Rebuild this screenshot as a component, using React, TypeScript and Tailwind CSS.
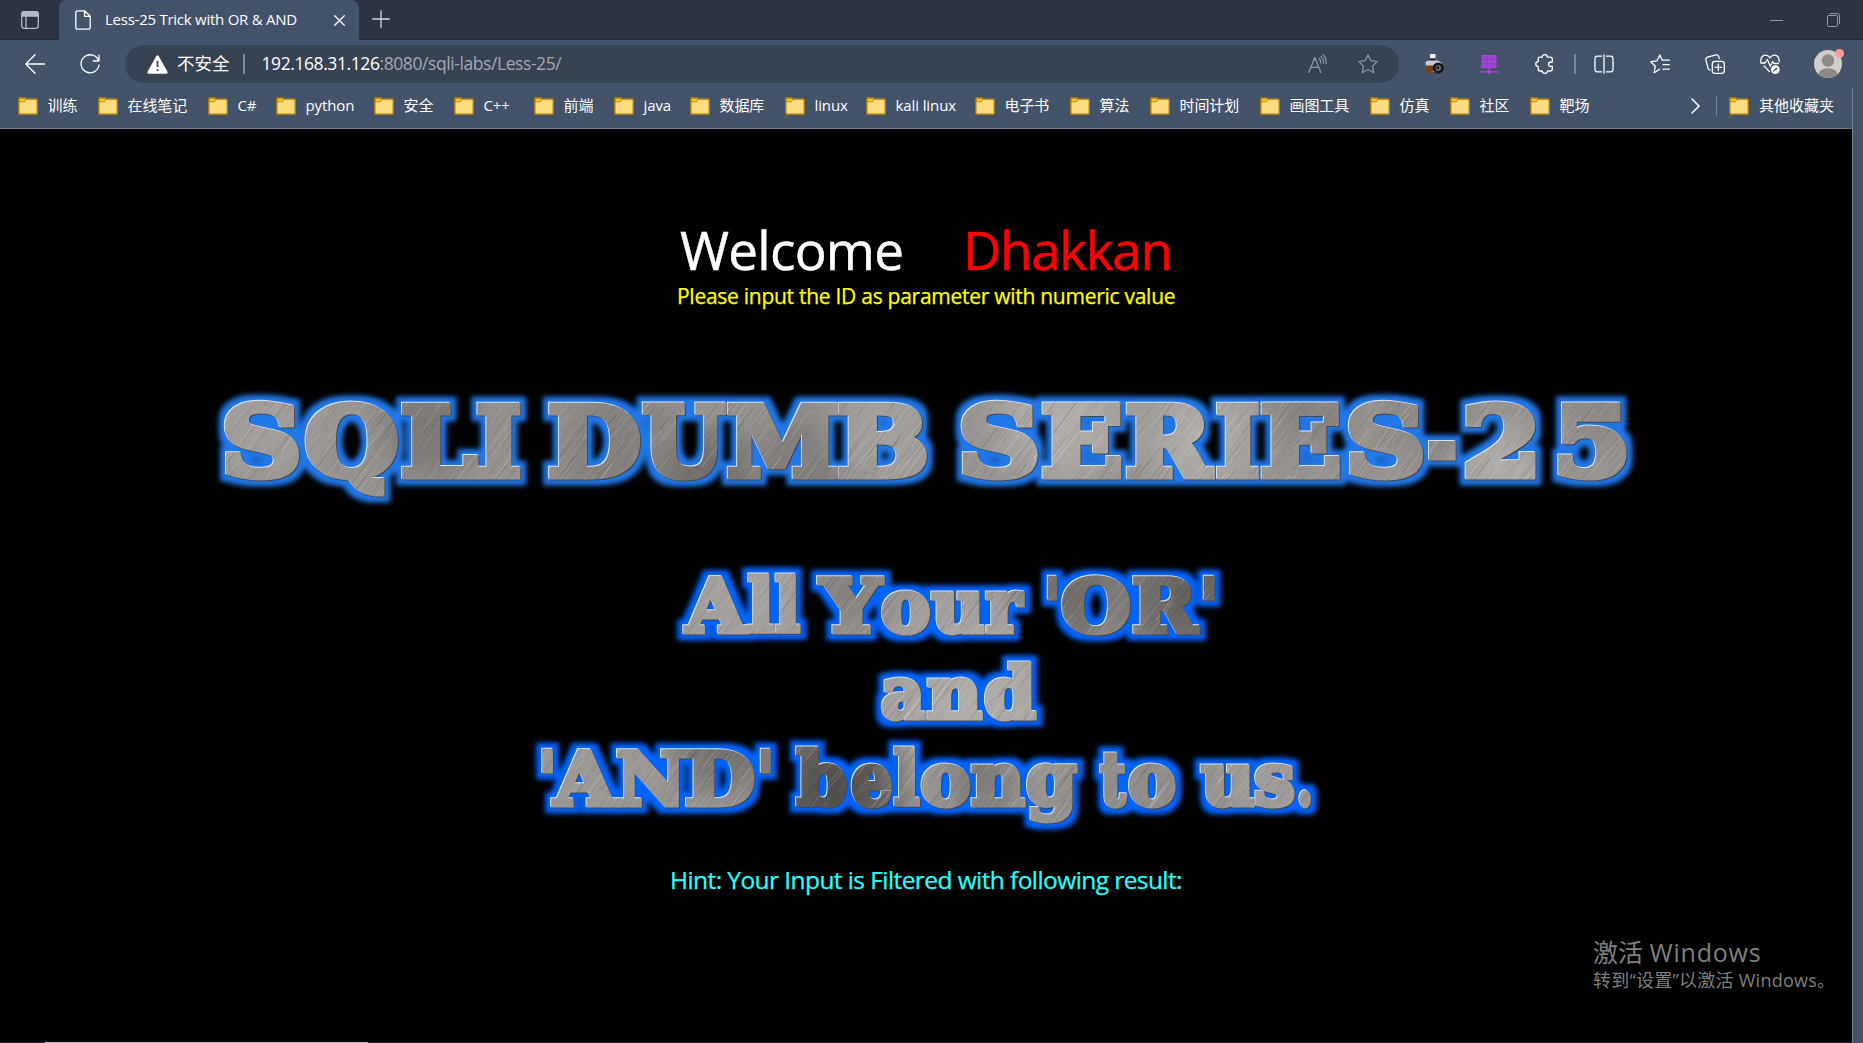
import React, { useMemo } from "react";

type Glyph = [string, number, number];

const TITLE: Glyph[] = [
  ["S", 225, 299.5], ["Q", 306, 398.5], ["L", 402, 479], ["I", 477, 521], [" ", 521.5, 548],
  ["D", 549, 640], ["U", 642.5, 727], ["M", 728, 838.5], ["B", 838.5, 927], [" ", 928, 961],
  ["S", 962, 1038], ["E", 1042.5, 1121], ["R", 1126.5, 1215], ["I", 1216.5, 1260], ["E", 1261.5, 1339.5],
  ["S", 1349, 1423.5], ["-", 1428, 1457], ["2", 1466, 1535], ["5", 1558, 1627],
];
const LINE_1: Glyph[] = [
  ["A", 683, 750], ["l", 747.5, 774.7], ["l", 774.7, 801], [" ", 802, 816], ["Y", 817, 885], ["o", 881, 930.5],
  ["u", 930.5, 985.5], ["r", 985.5, 1025], [" ", 1026, 1046], ["'", 1046.5, 1058.5], ["O", 1062, 1131],
  ["R", 1133, 1200], ["'", 1202.5, 1215.5],
];
const LINE_2: Glyph[] = [["a", 881, 927], ["n", 927, 983], ["d", 984, 1037]];
const LINE_3: Glyph[] = [
  ["'", 541, 554], ["A", 551, 619], ["N", 617, 686], ["D", 686, 755], ["'", 759.5, 772], [" ", 773, 795],
  ["b", 795.5, 847], ["e", 850.5, 892.5], ["l", 893.5, 920.5], ["o", 920.5, 971], ["n", 971, 1026],
  ["g", 1026, 1078], [" ", 1079, 1098], ["t", 1099, 1128], ["o", 1128, 1176.5], [" ", 1177, 1199],
  ["u", 1200, 1255], ["s", 1255, 1295], [".", 1298, 1312.5],
];

/* One line of metal lettering; each glyph is stretched to its own left and right edge. */
function MetalLine({ glyphs, y, size, originX, bold }: { glyphs: Glyph[]; y: number; size: number; originX: number; bold: number }) {
  const spans = useMemo(() => {
    const ctx = document.createElement("canvas").getContext("2d")!;
    ctx.font = `bold ${size}px "DejaVu Serif"`;
    return glyphs.map(([ch, left, right]) => {
      const m = ctx.measureText(ch);
      if (ch === " ") return { ch, x: left - originX, w: right - left };
      const ink = m.actualBoundingBoxRight + m.actualBoundingBoxLeft;
      const k = (right - left - bold) / ink;
      return { ch, x: left + bold / 2 - originX + m.actualBoundingBoxLeft * k, w: m.width * k };
    });
  }, [glyphs, size, originX, bold]);
  return (
    <text y={y} fontSize={size} fontWeight="bold" fontFamily="DejaVu Serif, serif" strokeWidth={bold} xmlSpace="preserve">
      {spans.map((s, i) => (
        <tspan key={i} x={s.x} textLength={s.w} lengthAdjust="spacingAndGlyphs">{s.ch}</tspan>
      ))}
    </text>
  );
}

/* [centre x, centre y, radius, colour] of a soft light or dark patch on the metal */
type Patch = [number, number, number, string];

const TITLE_PATCHES: Patch[] = [
  [60, 60, 90, "#a39f9d"], [230, 70, 70, "#7a7674"], [420, 90, 90, "#827e7c"], [510, 115, 60, "#6f6b69"], [600, 110, 80, "#7f7b79"],
  [690, 70, 80, "#a5a19f"], [860, 60, 90, "#b2aeac"], [1110, 45, 60, "#85817f"], [1000, 80, 80, "#b0acaa"], [1230, 60, 60, "#8b8785"],
  [1300, 110, 60, "#b0acaa"], [1400, 50, 50, "#8b8785"],
];
const MOTTO_PATCHES: Patch[] = [
  [250, 50, 100, "#a5a2a0"], [350, 40, 60, "#858280"], [450, 60, 70, "#9b9896"], [570, 45, 70, "#6d6a68"], [690, 50, 90, "#625f5d"],
  [470, 150, 130, "#b0adab"], [100, 230, 80, "#9c9997"], [220, 200, 60, "#716e6c"], [335, 240, 90, "#4e4b49"], [480, 230, 60, "#7d7a78"],
  [640, 230, 100, "#8f8c8a"], [770, 230, 70, "#a09d9b"],
];

const rand = (n: number) => {
  const v = Math.sin(n * 127.1 + 11.7) * 43758.5453;
  return v - Math.floor(v);
};

function MetalDefs({ id, glow, width, height, patches }: { id: string; glow: string; width: number; height: number; patches: Patch[] }) {
  const streaks = useMemo(
    () =>
      Array.from({ length: Math.round((width * height) / 90) }, (_, i) => {
        const len = 15 + rand(i * 5 + 3) * 35;
        return {
          d: `M${(rand(i * 5) * (width + 60)).toFixed(1)} ${(rand(i * 5 + 1) * (height + 30) - 30).toFixed(1)}l${(-len * 0.6).toFixed(1)} ${(len * 0.8).toFixed(1)}`,
          w: 0.4 + rand(i * 5 + 2) * 0.6,
          o: 0.08 + rand(i * 5 + 4) * 0.17,
        };
      }),
    [width, height],
  );
  return (
    <defs>
      {patches.map(([, , , c], i) => (
        <radialGradient key={i} id={`${id}-patch-${i}`}><stop offset="0" stopColor={c} /><stop offset=".45" stopColor={c} stopOpacity=".75" /><stop offset="1" stopColor={c} stopOpacity="0" /></radialGradient>
      ))}
      <pattern id={`${id}-metal`} patternUnits="userSpaceOnUse" width={width} height={height}>
        <rect width={width} height={height} fill="#979391" />
        {patches.map(([x, y, r], i) => <circle key={i} cx={x} cy={y} r={r} fill={`url(#${id}-patch-${i})`} />)}
        {streaks.map((s, i) => <path key={i} d={s.d} stroke={i % 2 ? "#fff" : "#2a2725"} strokeWidth={s.w} opacity={s.o} />)}
      </pattern>
      <filter id={`${id}-glow`} filterUnits="userSpaceOnUse" x="0" y="0" width={width} height={height} colorInterpolationFilters="sRGB">
        <feMorphology in="SourceAlpha" operator="dilate" radius="6" result="fat" />
        <feGaussianBlur in="fat" stdDeviation="2.8" result="soft" />
        <feFlood floodColor={glow} />
        <feComposite in2="soft" operator="in" result="halo" />
        <feOffset in="SourceAlpha" dx="1" dy="1" result="low" />
        <feFlood floodColor="#45474d" />
        <feComposite in2="low" operator="in" result="shade" />
        <feOffset in="SourceAlpha" dx="-1" dy="-1.3" result="high" />
        <feFlood floodColor="#d5e6fb" />
        <feComposite in2="high" operator="in" result="light" />
        <feMerge>
          <feMergeNode in="halo" /><feMergeNode in="shade" /><feMergeNode in="light" /><feMergeNode in="SourceGraphic" />
        </feMerge>
      </filter>
    </defs>
  );
}

function Folder() {
  return (
    <svg className="h-[18px] w-5 shrink-0" viewBox="0 0 20 18">
      <path d="M.8 2Q.8.8 2 .8H6.4Q7.4.8 7.8 2H18Q19.3 2 19.3 3.2V16Q19.3 17.3 18 17.3H2Q.8 17.3.8 16Z" fill="#fddd80" stroke="#a97c10" strokeWidth="1.4" />
      <path d="M1.4 4.6V2.2Q1.4 1.4 2.2 1.4H6.2Q7 1.4 7.3 2.3L7.8 3L6.3 4.8H1.4" fill="#fcc62b" stroke="#a97c10" strokeWidth=".8" />
    </svg>
  );
}

const Icon = ({ className, box = "0 0 20 20", children, w = 1.3 }: { className: string; box?: string; children: React.ReactNode; w?: number }) => (
  <svg className={className} viewBox={box} fill="none" stroke="currentColor" strokeWidth={w} strokeLinecap="round" strokeLinejoin="round">{children}</svg>
);

const STAR = "M10 .9L12.8 6.7L19.2 7.6L14.6 12.1L15.7 18.6L10 15.5L4.3 18.6L5.4 12.1L.8 7.6L7.2 6.7Z";

export default function App() {
  return (
    <div className="flex h-[1043px] w-[1863px] flex-col overflow-hidden bg-[#435369] font-['Open_Sans','Noto_Sans_CJK_SC',sans-serif] text-white">
      <div className="flex h-10 shrink-0 items-end border-b border-[#232c36] bg-[#2b343f]">
        <div className="flex h-full w-[59px] items-center pl-[21px]">
          <Icon className="h-[18px] w-[18px] text-[#b5bac1]" box="0 0 18 18"><rect x=".7" y=".7" width="16.6" height="16.6" rx="2.5" /><path d="M1 3Q1 1 3 1H15Q17 1 17 3V5H1Z" fill="currentColor" /><path d="M5 5V17" /></Icon>
        </div>
        <div className="-mb-px flex h-10 w-[300px] items-center rounded-t-lg bg-[#435369] pl-4">
          <Icon className="h-5 w-4 shrink-0" box="0 0 16 20"><path d="M3 .8H9.5L15.2 6.3V17Q15.2 19.2 13 19.2H3Q.8 19.2.8 17V3Q.8.8 3 .8ZM9.5 1V6.3H15" /></Icon>
          <span className="mb-[2px] ml-[14px] w-[229px] whitespace-nowrap text-[15px] tracking-[-0.25px]">Less-25 Trick with OR &amp; AND</span>
          <Icon className="h-[11px] w-[11px] shrink-0" box="0 0 11 11"><path d="M.7.7L10.3 10.3M10.3.7L.7 10.3" /></Icon>
        </div>
        <Icon className="mb-[11px] ml-[13px] h-[18px] w-[18px] text-[#d5d7da]" box="0 0 18 18"><path d="M9 .7V17.3M.7 9H17.3" /></Icon>
        <div className="mb-[12px] ml-auto flex items-center pr-[23px] text-[#9298a0]">
          <div className="mr-[44px] h-px w-[13px] bg-[#9298a0]" />
          <Icon className="h-[14px] w-[13px]" box="0 0 13 14" w={1}><rect x=".5" y="2.5" width="10" height="11" rx="1" /><path d="M3 .5H10.5Q12.5.5 12.5 2.5V10.5" /></Icon>
        </div>
      </div>

      <div className="flex h-[48px] shrink-0 items-start pt-[5px]">
        <div className="flex h-[38px] w-[125px] items-center pl-[25px]">
          <Icon className="h-5 w-5"><path d="M10 .8L.8 10L10 19.2M1 10H19.5" /></Icon>
          <Icon className="ml-[35px] h-5 w-5"><path d="M18.7 7.2A9 9 0 1 0 19 11M19 1.2V7H13.2" /></Icon>
        </div>
        <div className="flex h-[38px] w-[1274px] items-center rounded-full bg-[#374252] pl-[22px] pr-[21px]">
          <svg className="h-[19px] w-[21px]" viewBox="0 0 21 19"><path d="M9.2 1.2Q10.5-.7 11.8 1.2L20.5 16.8Q21 18.7 19.4 18.8H1.6Q0 18.7.5 16.8Z" fill="#fff" /><path d="M10.5 6V12M10.5 14.3V16" stroke="#374252" strokeWidth="1.8" /></svg>
          <span className="mb-[2px] ml-[9px] w-[66px] whitespace-nowrap text-[17.5px]">不安全</span>
          <div className="h-5 w-[1.5px] bg-[#818a96]" />
          <span className="mb-[2px] ml-[17px] whitespace-nowrap text-[17.5px] tracking-[-0.42px]">192.168.31.126<span className="text-[#a3a8ae]">:8080/sqli-labs/Less-25/</span></span>
          <div className="ml-auto flex items-center gap-[31px] text-[#8f969f]">
            <Icon className="h-5 w-[19px]" box="0 0 19 20"><path d="M.8 18.5L6.8 3.5L12.8 18.5M3 13.3H10.7M11 4.5Q13 6 12.9 9M13 2.5Q15.8 5 15.6 9.3M15 .8Q18.6 4 18.2 9.5" /></Icon>
            <Icon className="h-5 w-5"><path d={STAR} /></Icon>
          </div>
        </div>
        <div className="flex h-[38px] flex-1 items-center pl-[26px]">
          <svg className="h-5 w-[19px]" viewBox="0 0 19 20"><rect x="5" y="0" width="5.5" height="4.5" fill="#f2f2f2" /><path d="M5 4.5H10L11.5 8H4.5Z" fill="#222" /><path d="M.5 9Q1 6.5 4 6.5H13L17 9V18H1Z" fill="#c5c9d8" /><path d="M.3 11.5H8V19.5L.3 18.5Z" fill="#76411f" /><circle cx="13.2" cy="14" r="5.6" fill="#191a1d" /><circle cx="13.2" cy="14" r="2.7" fill="#777c84" /><circle cx="12.8" cy="13.8" r="1.5" fill="#111" /></svg>
          <svg className="ml-[35px] h-[19px] w-5" viewBox="0 0 20 19"><g fill="#b93ff2"><rect x="2.5" y="0" width="15" height="3.8" rx=".7" /><rect x="2.5" y="4.6" width="15" height="3.8" rx=".7" /><rect x="2.5" y="9.2" width="15" height="3.8" rx=".7" /><path d="M9.3 13H10.7V15.3Q12 15.6 12 16.3H20V17.6H12Q11.5 19 10 19T8 17.6H0V16.3H8Q8 15.6 9.3 15.3Z" /></g><path d="M4.5 1.9H15.5M4.5 6.5H15.5M4.5 11.1H15.5" stroke="#5a4a90" strokeWidth="1" strokeDasharray="1.8 1.2" /></svg>
          <Icon className="ml-[36px] h-5 w-[19px]" box="0 0 19 20"><path d="M5 3.2H7.3Q7.3.7 9.8.7T12.3 3.2H15Q17.3 3.2 17.3 5.2V8H16.2Q13.5 8.2 13.5 10.3T16.2 12.5H17.3V15Q17.3 17 15 17H12.6Q12.3 19.3 9.8 19.3T7.2 17H5Q3.2 17 3.2 15V12.6Q.7 12.2.7 10T3.2 7.6V5Q3.2 3.2 5 3.2Z" /></Icon>
          <div className="ml-[20px] h-5 w-[1.5px] bg-[#7c8795]" />
          <Icon className="ml-[18.5px] h-5 w-5"><path d="M7.5 2.2H3.5Q1 2.2 1 4.7V15.3Q1 17.8 3.5 17.8H7.5M12.5 2.2H16.5Q19 2.2 19 4.7V15.3Q19 17.8 16.5 17.8H12.5M10 .8V19.2" /></Icon>
          <Icon className="ml-[36px] h-5 w-5"><path d="M9.7 15.3L4.1 18.6L5.3 12.2L.8 7.7L7 6.8L9.8 1L12.2 6.2H19.2M13 10.7H19.2M13 15.2H19.2" /></Icon>
          <Icon className="ml-[35px] h-5 w-5"><rect x="7.3" y="7.3" width="12" height="12" rx="2.5" /><path d="M13.3 10V16.6M10 13.3H16.6M5 16.2Q3.5 16 3 14.2L.9 5.8Q.5 3.8 2.5 3.2L11 .9Q13 .5 13.7 2.5L14.2 4.5" /></Icon>
          <Icon className="ml-[35px] h-5 w-5"><path d="M9.5 17.5L4 12M.8 7.5Q.5 3 4 1.4Q7.5.4 10 3.8Q12.5.4 16 1.4Q19.5 3 19.1 7.6M.8 9H5L7.3 5.5L10.3 12.3L12.8 7.5L14 9.5H18.5" /><circle cx="15.3" cy="15.6" r="4.4" fill="#fff" stroke="none" /><path d="M13.8 16.8L16.8 14.2" stroke="#435369" /></Icon>
          <div className="relative ml-[34px] h-7 w-7">
            <svg className="h-7 w-7" viewBox="0 0 28 28"><defs><clipPath id="face"><circle cx="14" cy="14" r="14" /></clipPath></defs><g clipPath="url(#face)"><rect width="28" height="28" fill="#d0cecb" /><circle cx="14" cy="10.5" r="6.2" fill="#8d8985" /><ellipse cx="14" cy="25" rx="10" ry="6.8" fill="#8d8985" /></g></svg>
            <div className="absolute -right-[2px] -top-px h-[9px] w-[9px] rounded-full bg-[#ff9e98]" />
          </div>
        </div>
      </div>

      <div className="flex min-h-0 flex-1">
        <div className="flex w-[1852px] flex-col">
          <div className="flex h-[41px] shrink-0 items-start border-b border-[#747e8c] pl-[18px] pt-[7px] text-[15px] leading-[22px]">
            {([["训练", "w-20"], ["在线笔记", "w-[110px]"], ["C#", "w-[68px]"], ["python", "w-[98px]"], ["安全", "w-20"], ["C++", "w-20"], ["前端", "w-20"], ["java", "w-[76px]"], ["数据库", "w-[95px]"], ["linux", "w-[81px]"], ["kali linux", "w-[109px]"], ["电子书", "w-[95px]"], ["算法", "w-20"], ["时间计划", "w-[110px]"], ["画图工具", "w-[110px]"], ["仿真", "w-20"], ["社区", "w-20"], ["靶场", "w-20"]]).map(([name, width]) => (
              <div key={name} className={`flex h-[22px] shrink-0 items-center gap-[9.5px] whitespace-nowrap tracking-[-0.1px] ${width}`}><Folder /><span className="mb-[3px]">{name}</span></div>
            ))}
            <div className="ml-auto flex h-[22px] items-center pr-[18px] tracking-[0px]">
              <Icon className="h-4 w-[9px]" box="0 0 9 16" w={1.5}><path d="M1 1L8 8L1 15" /></Icon>
              <div className="ml-[16px] mr-[12px] h-5 w-px bg-[#7c8795]" />
              <Folder /><span className="mb-[3px] ml-[9.5px]">其他收藏夹</span>
            </div>
          </div>

          <div className="flex h-[913px] shrink-0 flex-col bg-black pt-[94px]">
            <div className="flex whitespace-nowrap pl-[680px] text-[53px] leading-none [-webkit-text-stroke:0.5px]">
              <span className="w-[283px] tracking-[-0.7px]">Welcome</span>
              <span className="tracking-[-1.35px] text-[#ff0000]">Dhakkan</span>
            </div>
            <div className="mt-[6px] whitespace-nowrap pl-[677px] text-[21px] leading-[28px] tracking-[-0.27px] text-[#ffff00] [-webkit-text-stroke:0.25px]">Please input the ID as parameter with numeric value</div>

            <svg className="ml-[200px] mt-[49px] h-[150px] w-[1450px] shrink-0" viewBox="0 0 1450 150">
              <MetalDefs id="title" glow="#2077e8" width={1450} height={150} patches={TITLE_PATCHES} />
              <g filter="url(#title-glow)" fill="url(#title-metal)" stroke="url(#title-metal)">
                <MetalLine glyphs={TITLE} y={117} size={95.5} originX={200} bold={7} />
              </g>
            </svg>
            <svg className="ml-[500px] mt-[40px] h-[300px] w-[860px] shrink-0" viewBox="0 0 860 300">
              <MetalDefs id="motto" glow="#0064ff" width={860} height={300} patches={MOTTO_PATCHES} />
              <g filter="url(#motto-glow)" fill="url(#motto-metal)" stroke="url(#motto-metal)">
                <MetalLine glyphs={LINE_1} y={83} size={72.5} originX={500} bold={5} />
                <MetalLine glyphs={LINE_2} y={169} size={70.5} originX={500} bold={5} />
                <MetalLine glyphs={LINE_3} y={255.5} size={72} originX={500} bold={5} />
              </g>
            </svg>
            <div className="mt-[14px] whitespace-nowrap pl-[670px] text-[24.5px] leading-[34px] tracking-[-0.58px] text-[#28ffff] [-webkit-text-stroke:0.25px]">Hint: Your Input is Filtered with following result:</div>
            <div className="ml-[1593px] mt-[39px] whitespace-nowrap text-[#7f7f7f]">
              <div className="text-[25px] leading-[32px]">激活 <span className="tracking-[0.8px]">Windows</span></div>
              <div className="text-[18px] leading-[24px] tracking-[0.25px]">转到“设置”以激活 Windows。</div>
            </div>
          </div>
          <div className="flex h-px shrink-0 bg-[#1d2b38] pl-[45px]"><div className="w-[323px] bg-[#c0c0c0]" /></div>
        </div>
        <div className="flex-1 border-l border-[#747e8c]" />
      </div>
    </div>
  );
}
